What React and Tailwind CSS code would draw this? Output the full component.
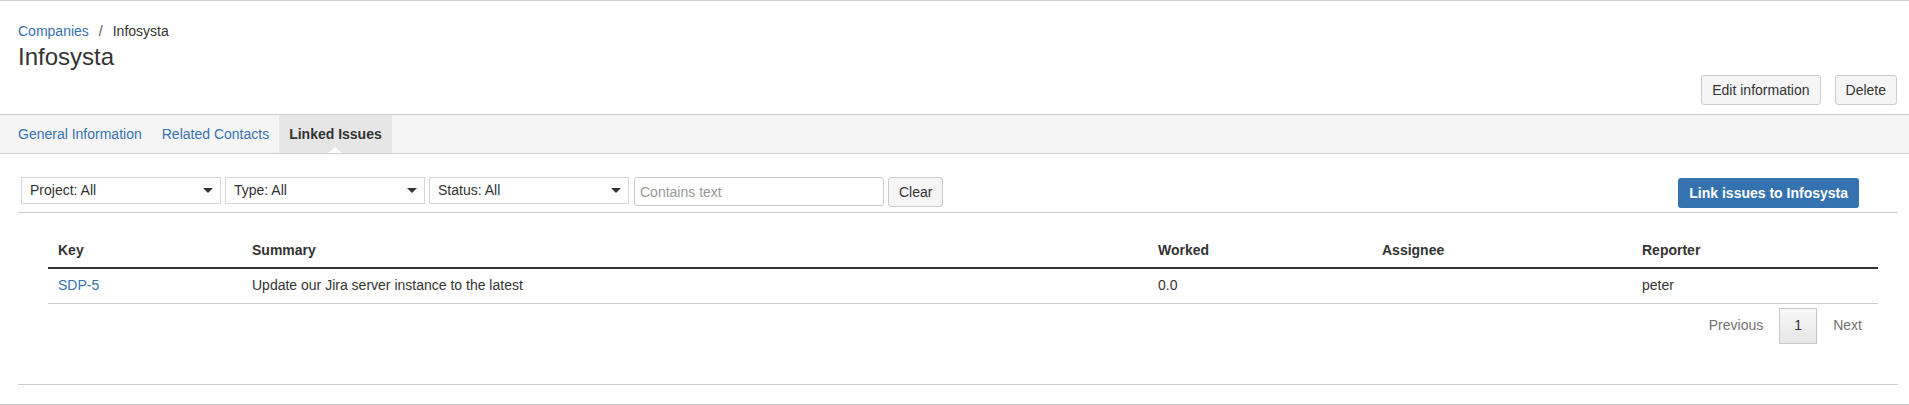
import React from 'react';

const FONT = "font-['Liberation_Sans',Arial,sans-serif]";

const FilterSelect = ({ label }) => (
  <div className="flex items-center justify-between w-[200px] h-[27px] border border-[#d6d6d6] bg-white pl-[8px] pr-[7px] text-[14px] text-[#333]">
    <span>{label}</span>
    <span className="w-0 h-0 border-x-[5px] border-x-transparent border-t-[5px] border-t-[#333]" />
  </div>
);

const Tab = ({ label, active }) => (
  <div
    className={
      active
        ? 'relative flex items-center px-[10px] h-full bg-[#e6e6e6] font-bold text-[#333]'
        : 'flex items-center px-[10px] h-full text-[#3572b0]'
    }
  >
    {label}
    {active && (
      <span className="absolute bottom-0 left-1/2 -translate-x-1/2 w-0 h-0 border-x-[7px] border-x-transparent border-b-[6px] border-b-white" />
    )}
  </div>
);

const columns = [
  { key: 'key', label: 'Key', width: 'w-[194px]' },
  { key: 'summary', label: 'Summary', width: 'w-[906px]' },
  { key: 'worked', label: 'Worked', width: 'w-[224px]' },
  { key: 'assignee', label: 'Assignee', width: 'w-[260px]' },
  { key: 'reporter', label: 'Reporter', width: 'w-[246px]' },
];

const issues = [
  {
    key: 'SDP-5',
    summary: 'Update our Jira server instance to the latest',
    worked: '0.0',
    assignee: '',
    reporter: 'peter',
  },
];

export default function App() {
  return (
    <div className={`${FONT} w-full h-[405px] bg-white text-[#333] text-[14px] border-t border-[#cfcfcf] flex flex-col`}>
      {/* header */}
      <div className="pl-[18px] pr-[12px] pt-[20px] pb-[9px] flex flex-col">
        <div className="flex items-center h-5 leading-5 text-[14px]">
          <a className="text-[#3572b0]">Companies</a>
          <span className="mx-[10px] text-[#555]">/</span>
          <span>Infosysta</span>
        </div>
        <h1 className="mt-[1px] text-[24px] leading-[30px] font-normal text-[#333]">Infosysta</h1>
        <div className="mt-[3px] flex justify-end gap-[14px]">
          <button className="h-[30px] px-[10px] bg-[#f5f5f5] border border-[#ccc] rounded-[3px] text-[14px] text-[#333]">
            Edit information
          </button>
          <button className="h-[30px] px-[10px] bg-[#f5f5f5] border border-[#ccc] rounded-[3px] text-[14px] text-[#333]">
            Delete
          </button>
        </div>
      </div>

      {/* tabs */}
      <div className="h-[40px] border-y border-[#ccc] bg-[#f5f5f5] flex pl-[8px] text-[14px]">
        <Tab label="General Information" />
        <Tab label="Related Contacts" />
        <Tab label="Linked Issues" active />
      </div>

      {/* content */}
      <div className="ml-[18px] mr-[11px] pt-[23px] pb-[40px] border-b border-[#ccc]">
        <div className="flex items-start h-[30px] pl-[3px] pr-[39px]">
          <div className="flex items-start gap-[4px]">
            <FilterSelect label="Project: All" />
            <FilterSelect label="Type: All" />
            <FilterSelect label="Status: All" />
            <input
              placeholder="Contains text"
              className="ml-[1px] w-[250px] h-[29px] border border-[#ccc] rounded-[3px] px-[5px] text-[14px] text-[#333] placeholder:text-[#999] outline-none"
            />
            <button className="h-[30px] px-[10px] bg-[#f5f5f5] border border-[#ccc] rounded-[3px] text-[14px] text-[#333]">
              Clear
            </button>
          </div>
          <button className="ml-auto mt-[1px] h-[30px] px-[11px] bg-[#3572b0] rounded-[3px] text-[14px] font-bold text-white">
            Link issues to Infosysta
          </button>
        </div>
        <div className="mt-[5px] border-t border-[#ccc]" />

        <div className="mt-[21px] ml-[30px] mr-[20px]">
          <table className="w-full table-fixed border-collapse text-[14px]">
            <colgroup>
              {columns.map((c) => (
                <col key={c.key} className={c.width} />
              ))}
            </colgroup>
            <thead>
              <tr className="border-b-2 border-[#333]">
                {columns.map((c) => (
                  <th key={c.key} className="h-[34px] pl-[10px] text-left font-bold text-[#333]">
                    {c.label}
                  </th>
                ))}
              </tr>
            </thead>
            <tbody>
              {issues.map((row) => (
                <tr key={row.key} className="border-b border-[#ccc]">
                  <td className="h-[35px] pl-[10px] text-[#3572b0]">{row.key}</td>
                  <td className="pl-[10px]">{row.summary}</td>
                  <td className="pl-[10px]">{row.worked}</td>
                  <td className="pl-[10px]">{row.assignee}</td>
                  <td className="pl-[10px]">{row.reporter}</td>
                </tr>
              ))}
            </tbody>
          </table>

          <div className="mt-[4px] flex justify-end items-center text-[14px]">
            <span className="px-4 text-[#707070]">Previous</span>
            <span className="w-[38px] h-[36px] flex items-center justify-center border border-[#c8c8c8] bg-gradient-to-b from-[#f7f7f7] to-[#e6e6e6] text-[#333]">
              1
            </span>
            <span className="px-4 text-[#707070]">Next</span>
          </div>
        </div>
      </div>

      <div className="mt-auto border-b border-[#ccc]" />
    </div>
  );
}
